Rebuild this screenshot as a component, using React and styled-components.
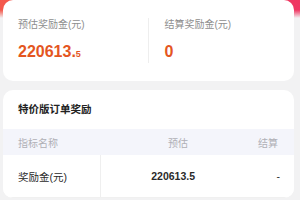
import React from "react"
import styled, { createGlobalStyle } from "styled-components"

const GlobalStyle = createGlobalStyle`
  html, body {
    margin: 0;
    padding: 0;
    background: #f2f2f3;
  }
  body {
    font-family: "Liberation Sans", "Noto Sans CJK SC", sans-serif;
  }
`

const Page = styled.div`
  width: 300px;
  height: 200px;
  overflow: hidden;
  box-sizing: border-box;
  padding: 0 6px 0 3px;
  background:
    linear-gradient(to bottom, rgba(242, 242, 243, 0) 0, rgba(242, 242, 243, 0) 10px, #f2f2f3 18px),
    linear-gradient(to right, #f4594c, #ef3763);
`

const Card = styled.div`
  background: #fff;
  border-radius: 10px;
  overflow: hidden;
  margin-bottom: 9px;
`

const Summary = styled(Card)`
  display: flex;
  padding: 18px 0;
`

const SummaryCol = styled.div`
  flex: 1;
  height: 45px;
  padding-left: ${(p) => (p.$divided ? "16px" : "15px")};
  border-left: ${(p) => (p.$divided ? "1px solid #eeeeee" : "none")};
`

const Label = styled.div`
  font-size: 10px;
  line-height: 14px;
  color: #8e8e8e;
`

const Amount = styled.div`
  margin-top: 10px;
  font-size: 16px;
  line-height: 20px;
  font-weight: 700;
  color: #e4561f;
`

const Small = styled.span`
  font-size: 9px;
`

const Title = styled.div`
  height: 39px;
  line-height: 39px;
  padding-left: 15px;
  font-size: 10.5px;
  font-weight: 700;
  color: #222;
`

const Row = styled.div`
  display: grid;
  grid-template-columns: 97px 105px 1fr;
  height: ${(p) => (p.$head ? "26px" : "42px")};
  align-items: stretch;
  background: ${(p) => (p.$head ? "#f4f5fb" : "#fff")};
  border-bottom: ${(p) => (p.$head ? "none" : "1px solid #f0f0f0")};
`

const Cell = styled.div`
  display: flex;
  align-items: center;
  justify-content: ${(p) => (p.$first ? "flex-start" : "flex-end")};
  padding: ${(p) => (p.$first ? "0 0 0 15px" : `0 ${p.$pr || 12}px 0 0`)};
  font-size: ${(p) => (p.$head ? "10px" : "10.5px")};
  font-weight: ${(p) => (p.$bold ? 700 : 400)};
  color: ${(p) => (p.$head ? "#b0b0b6" : "#2a2a2a")};
  border-left: ${(p) => (p.$line ? "1px solid #efefef" : "none")};
`

export default function App() {
  return (
    <Page>
      <GlobalStyle />
      <Summary>
        <SummaryCol>
          <Label>预估奖励金(元)</Label>
          <Amount>
            220613.<Small>5</Small>
          </Amount>
        </SummaryCol>
        <SummaryCol $divided>
          <Label>结算奖励金(元)</Label>
          <Amount>0</Amount>
        </SummaryCol>
      </Summary>
      <Card>
        <Title>特价版订单奖励</Title>
        <Row $head>
          <Cell $first $head>指标名称</Cell>
          <Cell $head $pr={17}>预估</Cell>
          <Cell $head $pr={16}>结算</Cell>
        </Row>
        <Row>
          <Cell $first>奖励金(元)</Cell>
          <Cell $line $bold $pr={10}>220613.5</Cell>
          <Cell $pr={14}>-</Cell>
        </Row>
      </Card>
    </Page>
  )
}
